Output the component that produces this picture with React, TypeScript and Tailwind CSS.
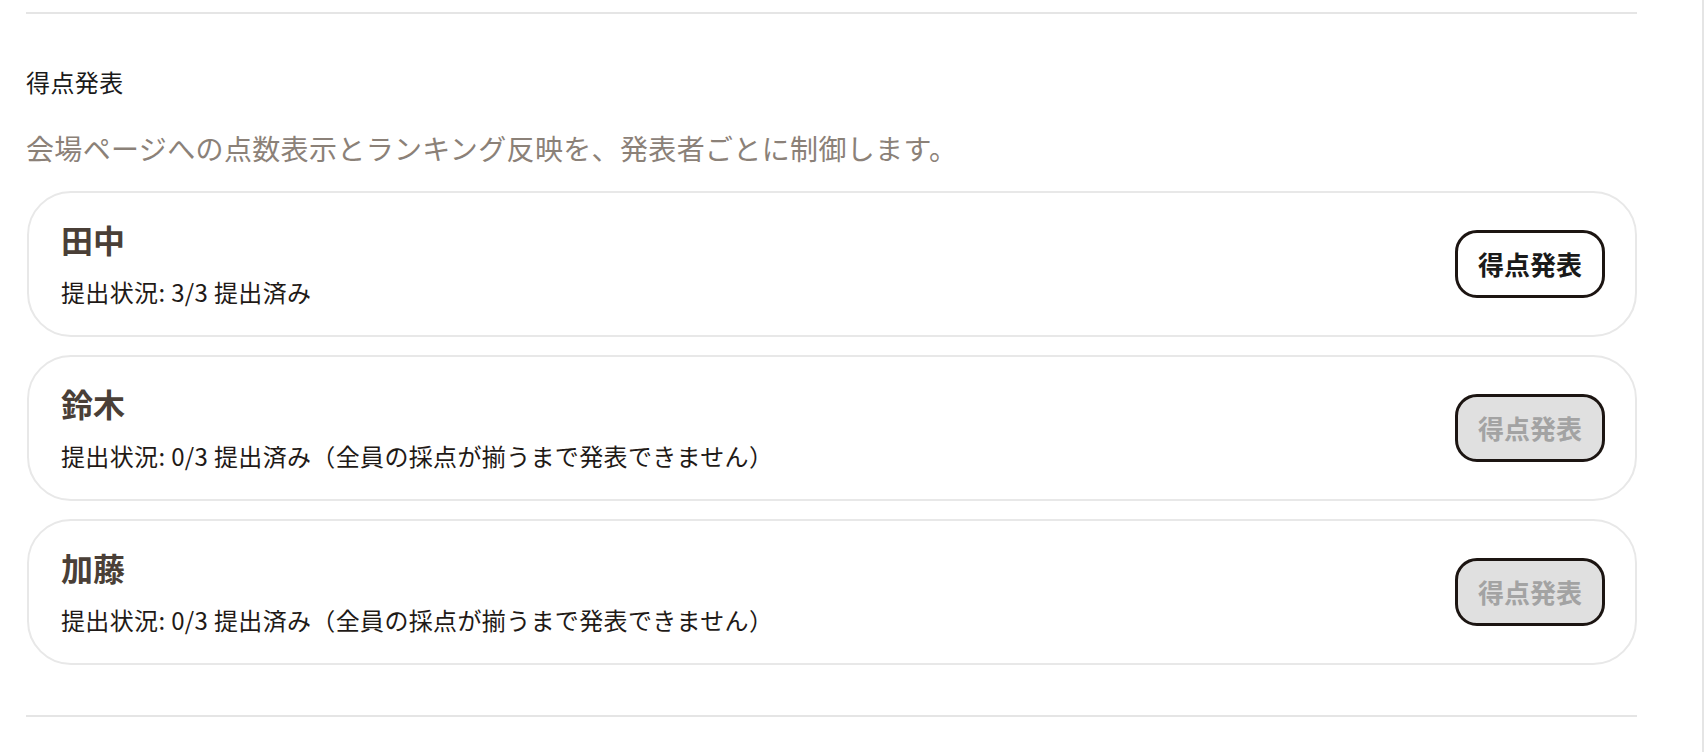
import React from "react";

type Row = { name: string; status: string; enabled: boolean };

const rows: Row[] = [
  { name: "田中", status: "提出状況: 3/3 提出済み", enabled: true },
  {
    name: "鈴木",
    status: "提出状況: 0/3 提出済み（全員の採点が揃うまで発表できません）",
    enabled: false,
  },
  {
    name: "加藤",
    status: "提出状況: 0/3 提出済み（全員の採点が揃うまで発表できません）",
    enabled: false,
  },
];

export default function App() {
  return (
    <div
      className="w-[1708px] h-[752px] bg-white overflow-hidden"
      style={{ fontFamily: '"Noto Sans CJK JP", "Noto Sans", sans-serif' }}
    >
      <div className="w-[1704px] h-[752px] border-r-2 border-[#e5e5e5]">
        <div className="ml-[26px] w-[1611px] pt-[12px]">
          <div className="h-[2px] bg-[#e5e5e5]" />
          <h2 className="mt-[50px] text-[24px] leading-[36px] font-normal tracking-[0.4px] text-[#1a1a1a]">
            得点発表
          </h2>
          <p className="mt-[27px] text-[28px] leading-[42px] tracking-[0.35px] text-[#8b8178]">
            会場ページへの点数表示とランキング反映を、発表者ごとに制御します。
          </p>
          <div className="mt-[22px] ml-[1px] flex flex-col gap-[18px]">
            {rows.map((r) => (
              <div
                key={r.name}
                className="h-[146px] rounded-[44px] border-2 border-[#e8e8e8] bg-white flex items-center justify-between pl-[32px] pr-[30px]"
              >
                <div className="flex flex-col">
                  <div className="text-[32px] leading-[40px] font-bold text-[#4a3f37]">
                    {r.name}
                  </div>
                  <div className="mt-[15px] text-[24px] leading-[36px] tracking-[0.35px] text-[#1f1a17]">
                    {r.status}
                  </div>
                </div>
                <button
                  className={
                    r.enabled
                      ? "border-[3px] border-[#1c1512] rounded-[22px] px-[20px] py-[12px] text-[26px] leading-[38px] font-bold text-[#1a1a1a] bg-white"
                      : "border-[3px] border-[#1c1512] rounded-[22px] px-[20px] py-[12px] text-[26px] leading-[38px] font-bold text-[#a3a3a3] bg-[#e0e0e0]"
                  }
                >
                  得点発表
                </button>
              </div>
            ))}
          </div>
          <div className="mt-[50px] h-[2px] bg-[#e5e5e5]" />
        </div>
      </div>
    </div>
  );
}
